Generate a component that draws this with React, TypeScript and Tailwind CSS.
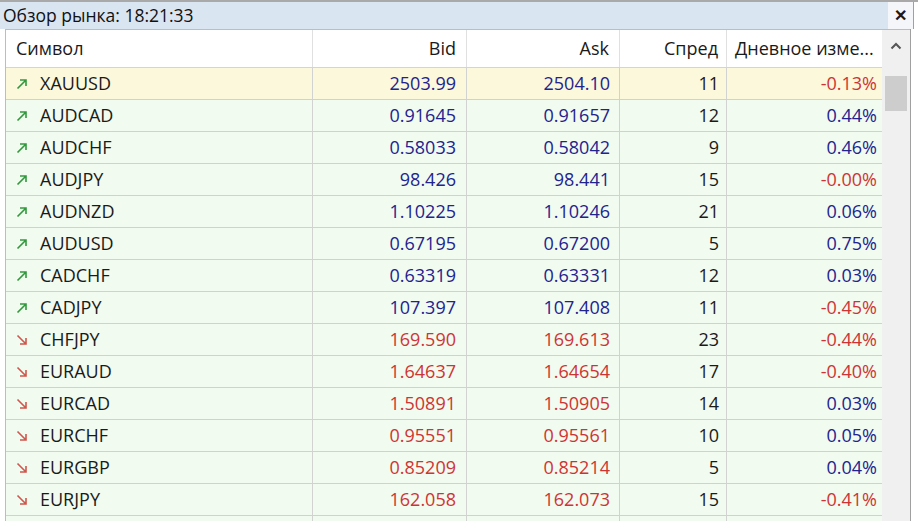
import React from 'react';

type Row = { s: string; bid: string; ask: string; sp: string; ch: string; up: boolean; hl?: boolean };

const rows: Row[] = [
  { s: 'XAUUSD', bid: '2503.99', ask: '2504.10', sp: '11', ch: '-0.13%', up: true, hl: true },
  { s: 'AUDCAD', bid: '0.91645', ask: '0.91657', sp: '12', ch: '0.44%', up: true },
  { s: 'AUDCHF', bid: '0.58033', ask: '0.58042', sp: '9', ch: '0.46%', up: true },
  { s: 'AUDJPY', bid: '98.426', ask: '98.441', sp: '15', ch: '-0.00%', up: true },
  { s: 'AUDNZD', bid: '1.10225', ask: '1.10246', sp: '21', ch: '0.06%', up: true },
  { s: 'AUDUSD', bid: '0.67195', ask: '0.67200', sp: '5', ch: '0.75%', up: true },
  { s: 'CADCHF', bid: '0.63319', ask: '0.63331', sp: '12', ch: '0.03%', up: true },
  { s: 'CADJPY', bid: '107.397', ask: '107.408', sp: '11', ch: '-0.45%', up: true },
  { s: 'CHFJPY', bid: '169.590', ask: '169.613', sp: '23', ch: '-0.44%', up: false },
  { s: 'EURAUD', bid: '1.64637', ask: '1.64654', sp: '17', ch: '-0.40%', up: false },
  { s: 'EURCAD', bid: '1.50891', ask: '1.50905', sp: '14', ch: '0.03%', up: false },
  { s: 'EURCHF', bid: '0.95551', ask: '0.95561', sp: '10', ch: '0.05%', up: false },
  { s: 'EURGBP', bid: '0.85209', ask: '0.85214', sp: '5', ch: '0.04%', up: false },
  { s: 'EURJPY', bid: '162.058', ask: '162.073', sp: '15', ch: '-0.41%', up: false },
];

function Arrow({ up }: { up: boolean }) {
  const c = up ? '#2f9a3c' : '#d0574e';
  return up ? (
    <svg width="12" height="12" viewBox="0 0 12 12" className="shrink-0">
      <path d="M1.5 10.5 L10 2 M4 2 H10 V8" stroke={c} strokeWidth="1.6" fill="none" />
    </svg>
  ) : (
    <svg width="12" height="12" viewBox="0 0 12 12" className="shrink-0">
      <path d="M1.5 1.5 L10 10 M4 10 H10 V4" stroke={c} strokeWidth="1.6" fill="none" />
    </svg>
  );
}

const blue = 'text-[#22238f]';
const red = 'text-[#cf3434]';
const cols = 'grid grid-cols-[307px_154px_153px_107px_156px]';

export default function App() {
  return (
    <div className="w-[918px] h-[521px] overflow-hidden bg-white flex flex-col text-[#1a1a1a]" style={{ fontFamily: '"Open Sans", "Noto Sans", sans-serif' }}>
      {/* заголовок */}
      <div className="h-[29px] shrink-0 flex border-t-2 border-[#a9a9a9]">
        <div className="w-[888px] bg-[#d9e5f1] flex items-center pl-[3px] text-[17.5px] text-[#111]">Обзор рынка: 18:21:33</div>
        <div className="flex-1 flex items-center justify-center bg-[#f4f6f9] text-[16px] font-bold leading-none pb-[2px]">✕</div>
        <div className="w-[5px] border-l border-[#a0a0a0] bg-white" />
      </div>

      <div className="flex flex-1 min-h-0 pl-[5px]">
        <div className="w-[877px] border-l border-t border-[#bdbdbd] flex flex-col min-h-0 overflow-hidden text-[18px]">
          {/* шапка */}
          <div className={`${cols} h-[38px] shrink-0 border-b border-[#d4d4d4]`}>
            <div className="flex items-center pl-[10px] border-r border-[#e0e0e0]">Символ</div>
            <div className="flex items-center justify-end pr-[10px] border-r border-[#e0e0e0]">Bid</div>
            <div className="flex items-center justify-end pr-[10px] border-r border-[#e0e0e0]">Ask</div>
            <div className="flex items-center justify-end pr-[8px] border-r border-[#e0e0e0]">Спред</div>
            <div className="flex items-center pl-[8px] whitespace-nowrap">Дневное изме...</div>
          </div>
          {rows.map((r) => {
            const priceCol = r.up ? blue : red;
            const chCol = r.ch.startsWith('-') ? red : blue;
            return (
              <div
                key={r.s}
                className={`${cols} h-[32px] shrink-0 border-b border-[#cfd3cf] ${r.hl ? 'bg-[#fbf8dc]' : 'bg-[#f1fbef]'}`}
              >
                <div className="flex items-center pl-[10px] gap-[12px] border-r border-[#d2d2d2]">
                  <Arrow up={r.up} />
                  <span>{r.s}</span>
                </div>
                <div className={`flex items-center justify-end pr-[10px] border-r border-[#d2d2d2] ${priceCol}`}>{r.bid}</div>
                <div className={`flex items-center justify-end pr-[9px] border-r border-[#d2d2d2] ${priceCol}`}>{r.ask}</div>
                <div className="flex items-center justify-end pr-[7px] border-r border-[#d2d2d2]">{r.sp}</div>
                <div className={`flex items-center justify-end pr-[6px] ${chCol}`}>{r.ch}</div>
              </div>
            );
          })}
          {/* следующая строка, уходящая за край */}
          <div className={`${cols} h-[32px] shrink-0 bg-[#f1fbef]`}>
            <div className="border-r border-[#d2d2d2]" />
            <div className="border-r border-[#d2d2d2]" />
            <div className="border-r border-[#d2d2d2]" />
            <div className="border-r border-[#d2d2d2]" />
            <div />
          </div>
        </div>
        {/* полоса прокрутки */}
        <div className="w-[28px] bg-[#f0f0f0] border-t border-[#bdbdbd] flex flex-col items-center">
          <svg width="12" height="8" viewBox="0 0 12 8" className="mt-[12px]">
            <path d="M1.5 6.5 L6 2 L10.5 6.5" stroke="#555" strokeWidth="2" fill="none" />
          </svg>
          <div className="w-[22px] h-[35px] bg-[#cdcdcd] mt-[26px]" />
        </div>
        <div className="flex-1 border-l border-[#a0a0a0] bg-white" />
      </div>
    </div>
  );
}
